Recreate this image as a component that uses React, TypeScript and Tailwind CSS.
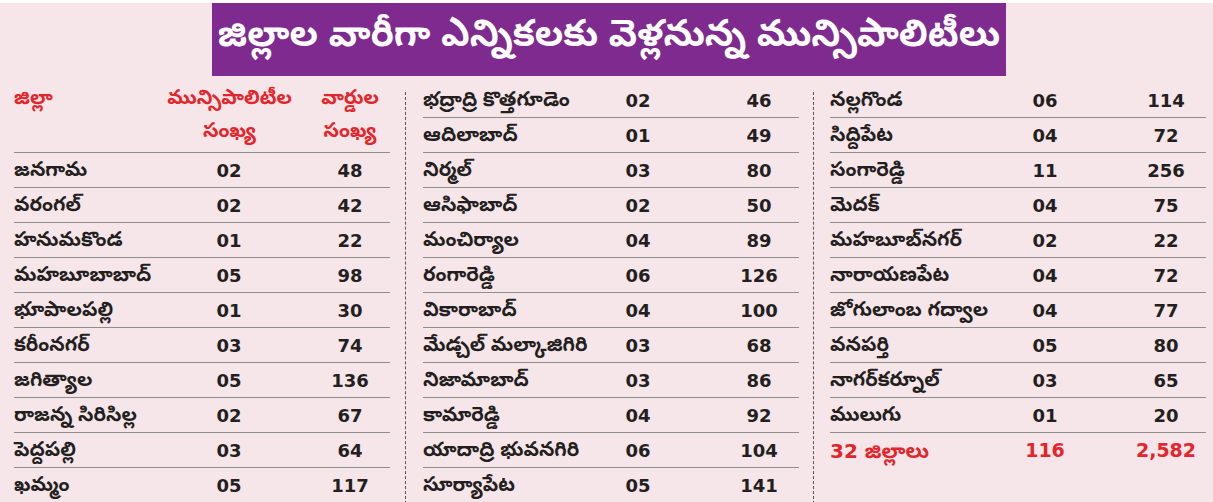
type Row = [string, string, string]

const col1: Row[] = [
  ['జనగామ', '02', '48'],
  ['వరంగల్', '02', '42'],
  ['హనుమకొండ', '01', '22'],
  ['మహబూబాబాద్', '05', '98'],
  ['భూపాలపల్లి', '01', '30'],
  ['కరీంనగర్', '03', '74'],
  ['జగిత్యాల', '05', '136'],
  ['రాజన్న సిరిసిల్ల', '02', '67'],
  ['పెద్దపల్లి', '03', '64'],
  ['ఖమ్మం', '05', '117'],
]

const col2: Row[] = [
  ['భద్రాద్రి కొత్తగూడెం', '02', '46'],
  ['ఆదిలాబాద్', '01', '49'],
  ['నిర్మల్', '03', '80'],
  ['ఆసిఫాబాద్', '02', '50'],
  ['మంచిర్యాల', '04', '89'],
  ['రంగారెడ్డి', '06', '126'],
  ['వికారాబాద్', '04', '100'],
  ['మేడ్చల్ మల్కాజిగిరి', '03', '68'],
  ['నిజామాబాద్', '03', '86'],
  ['కామారెడ్డి', '04', '92'],
  ['యాదాద్రి భువనగిరి', '06', '104'],
  ['సూర్యాపేట', '05', '141'],
]

const col3: Row[] = [
  ['నల్లగొండ', '06', '114'],
  ['సిద్దిపేట', '04', '72'],
  ['సంగారెడ్డి', '11', '256'],
  ['మెదక్', '04', '75'],
  ['మహబూబ్‌నగర్', '02', '22'],
  ['నారాయణపేట', '04', '72'],
  ['జోగులాంబ గద్వాల', '04', '77'],
  ['వనపర్తి', '05', '80'],
  ['నాగర్‌కర్నూల్', '03', '65'],
  ['ములుగు', '01', '20'],
]

const te = "font-['Noto_Sans_Telugu','Noto_Sans',sans-serif]"
const num = "font-['DejaVu_Sans',sans-serif]"

function DataRow({ row, line = true, red = false }: { row: Row; line?: boolean; red?: boolean }) {
  const color = red ? 'text-[#e3262c]' : 'text-[#231f20]'
  const numSize = red ? 'text-[19px]' : 'text-[18px]'
  return (
    <div className={`flex items-center h-[35px] ${line ? 'border-b-[1.5px] border-[#8e8e8e]' : ''} ${color}`}>
      <div className={`w-[155px] pt-[5px] text-[20px] leading-none font-bold whitespace-nowrap ${red ? num : te}`}>
        {red ? (
          <>
            <span className="text-[20px]">32 </span>
            <span className={`text-[21px] ${te}`}>జిల్లాలు</span>
          </>
        ) : row[0]}
      </div>
      <div className={`w-[120px] text-center font-bold ${numSize} ${num}`}>{row[1]}</div>
      <div className="w-[21px]" />
      <div className={`w-[80px] text-center font-bold ${numSize} ${num}`}>{row[2]}</div>
    </div>
  )
}

function Separator() {
  return <div className="mt-[9px] border-l border-dashed border-[#555]" />
}

export default function App() {
  return (
    <div className="w-[1213px] h-[502px] overflow-hidden bg-[#f6e5e9] border-t-[3px] border-white">
      {/* Title */}
      <div className="ml-[212px] w-[794px] h-[73px] bg-[#7f2a8e] flex items-center justify-center">
        <span className={`text-white text-[37px] font-bold leading-none whitespace-nowrap ${te}`}>
          జిల్లాల వారీగా ఎన్నికలకు వెళ్లనున్న మున్సిపాలిటీలు
        </span>
      </div>

      <div className="flex h-[426px] mt-[7px]">
        {/* Column 1 */}
        <div className="w-[405px] pl-[14px]">
          <div className="w-[376px]">
            <div className={`flex h-[70px] pt-[1px] border-b-[1.5px] border-[#8e8e8e] text-[#e3262c] text-[20px] font-bold leading-[33px] whitespace-nowrap ${te}`}>
              <div className="w-[155px]">జిల్లా</div>
              <div className="w-[141px] text-center -ml-[10px] mr-[10px]">
                <div>మున్సిపాలిటీల</div>
                <div>సంఖ్య</div>
              </div>
              <div className="w-[80px] text-center">
                <div>వార్డుల</div>
                <div>సంఖ్య</div>
              </div>
            </div>
            {col1.map((r, i) => (
              <DataRow key={r[0]} row={r} line={i < col1.length - 1} />
            ))}
          </div>
        </div>

        <Separator />

        {/* Column 2 */}
        <div className="w-[407px] pl-[17px]">
          <div className="w-[376px]">
            {col2.map((r, i) => (
              <DataRow key={r[0]} row={r} line={i < col2.length - 1} />
            ))}
          </div>
        </div>

        <Separator />

        {/* Column 3 */}
        <div className="flex-1 pl-[16px]">
          <div className="w-[376px]">
            {col3.map(r => (
              <DataRow key={r[0]} row={r} />
            ))}
            <DataRow row={['32 జిల్లాలు', '116', '2,582']} line={false} red />
          </div>
        </div>
      </div>
    </div>
  )
}
